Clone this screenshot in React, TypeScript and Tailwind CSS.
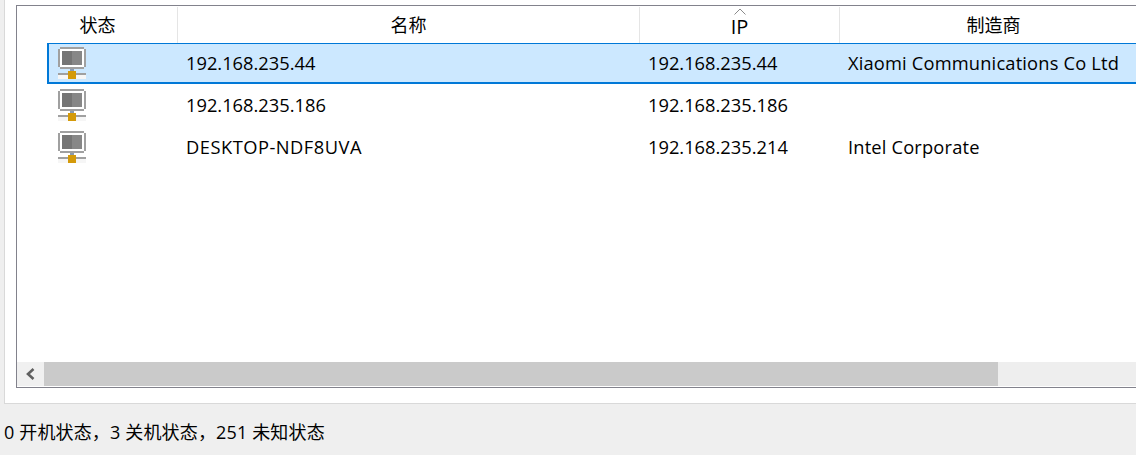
const rows = [
  { name: "192.168.235.44", ip: "192.168.235.44", maker: "Xiaomi Communications Co Ltd", selected: true },
  { name: "192.168.235.186", ip: "192.168.235.186", maker: "", selected: false },
  { name: "DESKTOP-NDF8UVA", ip: "192.168.235.214", maker: "Intel Corporate", selected: false },
];

function HostIcon() {
  return (
    <svg width="28" height="32" viewBox="0 0 28 32" shapeRendering="crispEdges" className="block">
      <rect x="2" y="0" width="24" height="22" fill="#a0a0a0" />
      <rect x="0" y="2" width="2" height="18" fill="#a0a0a0" />
      <rect x="26" y="2" width="2" height="18" fill="#a0a0a0" />
      <rect x="2" y="2" width="24" height="18" fill="#ffffff" />
      <rect x="4" y="4" width="10" height="14" fill="#757575" />
      <rect x="14" y="4" width="10" height="14" fill="#878787" />
      <rect x="12" y="22" width="4" height="4" fill="#8a9bb0" />
      <rect x="0" y="26" width="28" height="2" fill="#a0a0a0" />
      <rect x="0" y="28" width="28" height="4" fill="#f6f6f6" />
      <rect x="10" y="24" width="8" height="8" fill="#d49a0a" />
    </svg>
  );
}

function HeaderCell({ label, className, sort }: { label: string; className: string; sort?: boolean }) {
  return (
    <div className={`relative flex items-center justify-center shrink-0 border-r border-[#e5e5e5] ${className}`}>
      {sort && (
        <svg width="12" height="7" viewBox="0 0 12 7" className="absolute top-[1px] left-[94px]">
          <path d="M0.5 6.5 L6 1 L11.5 6.5" fill="none" stroke="#8a8a8a" strokeWidth="1" />
        </svg>
      )}
      {label}
    </div>
  );
}

export default function App() {
  return (
    <div
      className="w-[1136px] h-[455px] overflow-hidden bg-[#efefef] text-[18.3px] text-black flex flex-col"
      style={{ fontFamily: '"Open Sans", "Noto Sans CJK SC", sans-serif' }}
    >
      <div className="ml-[4px] w-[1200px] h-[404px] shrink-0 bg-white border-l border-b border-[#d9d9d9] pl-[11px] pt-[5px]">
        <div className="w-[1200px] h-[383px] border-l border-t border-b border-[#82828c] flex flex-col">
          <div className="h-[37px] shrink-0 flex items-stretch text-[18px] pt-[1px]">
            <HeaderCell label="状态" className="w-[161px] pl-[1px]" />
            <HeaderCell label="名称" className="w-[462px]" />
            <HeaderCell label="IP" className="w-[200px] text-[20px] pt-[3px]" sort />
            <HeaderCell label="制造商" className="w-[308px]" />
          </div>
          <div className="flex-1 min-h-0">
            {rows.map((row) => (
              <div
                key={row.ip}
                className={`flex items-center ml-[30px] ${
                  row.selected
                    ? "h-[41px] mb-[1px] bg-[#cce8ff] border-l-2 border-b-2 border-t border-[#0078d7] pl-[9px]"
                    : "h-[42px] pb-[2px] pl-[11px]"
                }`}
              >
                <div className="w-[128px] shrink-0">
                  <HostIcon />
                </div>
                <div className={`w-[462px] shrink-0 ${row.name.startsWith("DESKTOP") ? "tracking-[0.5px]" : ""}`}>
                  {row.name}
                </div>
                <div className="w-[200px] shrink-0">{row.ip}</div>
                <div className="flex-1 tracking-[0.17px]">{row.maker}</div>
              </div>
            ))}
          </div>
          <div className="h-[24px] shrink-0 mb-[1px] flex bg-[#eeeeee]">
            <div className="w-[27px] flex items-center justify-center bg-[#f0f0f0]">
              <svg width="11" height="12" viewBox="0 0 11 12">
                <path d="M8.5 1 L3 6 L8.5 11" fill="none" stroke="#606060" strokeWidth="2.6" />
              </svg>
            </div>
            <div className="w-[954px] bg-[#cacaca]" />
          </div>
        </div>
      </div>
      <div className="flex-1 flex items-center pl-[4px] pt-[6px] text-[18px] tracking-[0.15px]">0 开机状态，3 关机状态，251 未知状态</div>
    </div>
  );
}
